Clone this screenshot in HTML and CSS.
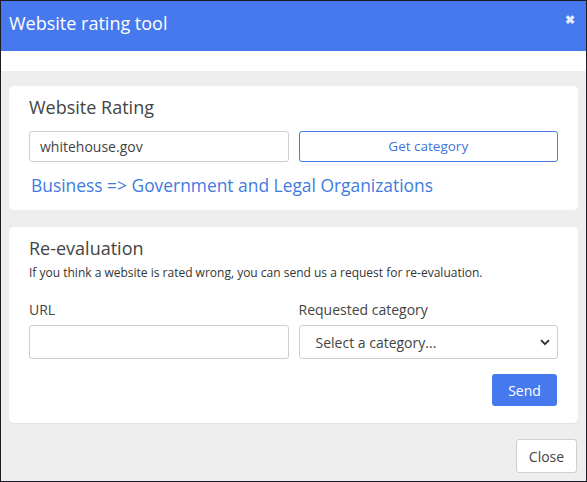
FILE: index.html
```html
<!DOCTYPE html>
<html>
<head>
<meta charset="utf-8">
<link rel="stylesheet" href="styles.css">
</head>
<body>
<div class="dialog">
  <div class="header">
    <span class="title">Website rating tool</span>
    <span class="close-x">&#x2716;</span>
  </div>
  <div class="strip"></div>
  <div class="body">
    <div class="card card-rating">
      <h2 class="card-title">Website Rating</h2>
      <div class="row">
        <div class="input">whitehouse.gov</div>
        <div class="btn-outline">Get category</div>
      </div>
      <div class="result">Business =&gt; Government and Legal Organizations</div>
    </div>
    <div class="card card-reeval">
      <h2 class="card-title">Re-evaluation</h2>
      <p class="hint">If you think a website is rated wrong, you can send us a request for re-evaluation.</p>
      <div class="row labels">
        <div class="field">
          <div class="label">URL</div>
          <div class="input tall"></div>
        </div>
        <div class="field">
          <div class="label">Requested category</div>
          <div class="input tall select">
            <span>Select a category...</span>
            <svg class="chev" width="10" height="7" viewBox="0 0 10 7"><path d="M1 1.2 L5 5.2 L9 1.2" fill="none" stroke="#333" stroke-width="1.9"/></svg>
          </div>
        </div>
      </div>
      <div class="send-row"><div class="btn-primary">Send</div></div>
    </div>
    <div class="footer"><div class="btn-close">Close</div></div>
  </div>
</div>
</body>
</html>
```
FILE: styles.css
```css
html, body { margin: 0; padding: 0; }
body {
  font-family: "Open Sans", "Noto Sans", sans-serif;
  width: 587px;
  height: 482px;
  overflow: hidden;
}
.dialog {
  width: 585px;
  height: 480px;
  border: 1px solid #1c1c24;
  display: flex;
  flex-direction: column;
  background: #eeeeee;
}
.header {
  height: 50px;
  background: #4679ee;
  display: flex;
  align-items: center;
  justify-content: space-between;
  padding: 0 8px 0 8px;
  flex-shrink: 0;
}
.title {
  color: #fff;
  font-size: 18px;
  margin-top: -6px;
}
.close-x {
  color: #e4ecfd;
  font-size: 12px;
  font-weight: bold;
  margin-top: -14px;
  margin-right: 3px;
}
.strip {
  height: 20px;
  background: #fff;
  flex-shrink: 0;
}
.body {
  flex: 1;
  padding: 15px 8px 0 8px;
  display: flex;
  flex-direction: column;
}
.card {
  background: #fff;
  border-radius: 5px;
  padding: 0 20px;
}
.card-rating {
  height: 124px;
  margin-bottom: 17px;
}
.card-reeval {
  height: 196px;
  box-shadow: 0 1px 0 #e2e2e2;
}
.card-title {
  font-weight: normal;
  font-size: 18px;
  color: #444;
  margin: 0;
  padding-top: 8px;
  line-height: 26px;
}
.row {
  display: grid;
  grid-template-columns: 1fr 1fr;
  gap: 10px;
}
.card-rating .row { margin-top: 11px; }
.input {
  height: 31px;
  box-sizing: border-box;
  border: 1px solid #cfcfcf;
  border-radius: 3px;
  font-size: 14px;
  color: #444;
  padding: 0 10px;
  display: flex;
  align-items: center;
}
.btn-outline {
  height: 31px;
  box-sizing: border-box;
  border: 1px solid #4a7bdf;
  border-radius: 3px;
  color: #3f73dd;
  font-size: 13.5px;
  padding-bottom: 2px;
  display: flex;
  align-items: center;
  justify-content: center;
}
.result {
  color: #3f7be0;
  font-size: 17.4px;
  margin-top: 10px;
  padding-left: 2px;
  line-height: 26px;
}
.hint {
  margin: 4px 0 0 0;
  font-size: 12px;
  color: #333;
  line-height: 16px;
}
.labels { margin-top: 20px; }
.field { display: flex; flex-direction: column; min-width: 0; }
.label {
  font-size: 14px;
  color: #444;
  line-height: 18px;
  margin-bottom: 6px;
}
.tall { height: 34px; }
.select {
  justify-content: space-between;
  padding: 0 7px 0 16px;
  color: #444;
}
.send-row {
  display: flex;
  justify-content: flex-end;
  margin-top: 15px;
  margin-right: 1px;
}
.btn-primary {
  width: 65px;
  height: 32px;
  background: #4679ee;
  border-radius: 3px;
  color: #fff;
  font-size: 14px;
  display: flex;
  align-items: center;
  justify-content: center;
}
.footer {
  display: flex;
  justify-content: flex-end;
  margin-top: 16px;
  padding-right: 1px;
}
.btn-close {
  width: 61px;
  height: 34px;
  box-sizing: border-box;
  background: #fff;
  border: 1px solid #cfcfcf;
  border-radius: 3px;
  color: #444;
  font-size: 14px;
  display: flex;
  align-items: center;
  justify-content: center;
}
```
